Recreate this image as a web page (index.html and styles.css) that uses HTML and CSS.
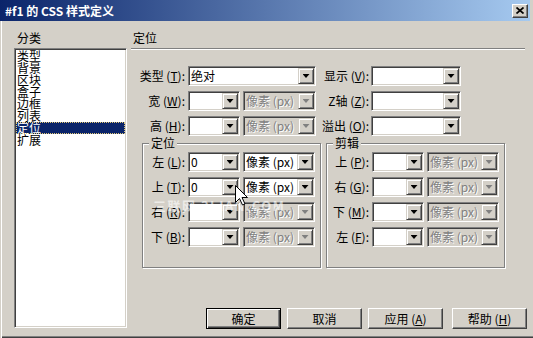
FILE: index.html
```html
<!DOCTYPE html>
<html lang="zh-CN">
<head>
    <meta charset="UTF-8">
    <title>#f1 的 CSS 样式定义</title>
    <link rel="stylesheet" href="styles.css">
</head>
<body>
<div class="window">
    <div class="titlebar">
        <span class="title">#f1 的 CSS 样式定义</span>
        <span class="close-btn">
            <svg width="8" height="7" viewBox="0 0 8 7"><path d="M0.5 0.5L7.5 6.5M7.5 0.5L0.5 6.5" stroke="#000" stroke-width="1.7"/></svg>
        </span>
    </div>

    <div class="dialog">
        <!-- 分类列表 -->
        <div class="category">
            <div class="caption">分类</div>
            <ul class="listbox">
                <li>类型</li>
                <li>背景</li>
                <li>区块</li>
                <li>盒子</li>
                <li>边框</li>
                <li>列表</li>
                <li class="selected">定位</li>
                <li>扩展</li>
            </ul>
        </div>

        <!-- 定位面板 -->
        <div class="panel">
            <div class="caption heading">定位</div>
            <div class="etched-line"></div>

            <div class="grid-top">
                <label>类型 (<u>T</u>):</label>
                <div class="combo wide"><span class="combo-text">绝对</span><span class="combo-btn"><i class="arrow"></i></span></div>
                <label>显示 (<u>V</u>):</label>
                <div class="combo side"><span class="combo-text"></span><span class="combo-btn"><i class="arrow"></i></span></div>

                <label>宽 (<u>W</u>):</label>
                <div class="pair">
                    <div class="combo num"><span class="combo-text"></span><span class="combo-btn"><i class="arrow"></i></span></div>
                    <div class="combo unit top-unit disabled"><span class="combo-text">像素 (px)</span><span class="combo-btn"><i class="arrow"></i></span></div>
                </div>
                <label>Z轴 (<u>Z</u>):</label>
                <div class="combo side"><span class="combo-text"></span><span class="combo-btn"><i class="arrow"></i></span></div>

                <label>高 (<u>H</u>):</label>
                <div class="pair">
                    <div class="combo num"><span class="combo-text"></span><span class="combo-btn"><i class="arrow"></i></span></div>
                    <div class="combo unit top-unit disabled"><span class="combo-text">像素 (px)</span><span class="combo-btn"><i class="arrow"></i></span></div>
                </div>
                <label>溢出 (<u>O</u>):</label>
                <div class="combo side"><span class="combo-text"></span><span class="combo-btn"><i class="arrow"></i></span></div>
            </div>

            <div class="groups">
                <fieldset class="group">
                    <legend>定位</legend>
                    <div class="group-grid">
                        <label>左 (<u>L</u>):</label>
                        <div class="pair">
                            <div class="combo num"><span class="combo-text">0</span><span class="combo-btn"><i class="arrow"></i></span></div>
                            <div class="combo unit"><span class="combo-text">像素 (px)</span><span class="combo-btn"><i class="arrow"></i></span></div>
                        </div>
                        <label>上 (<u>T</u>):</label>
                        <div class="pair">
                            <div class="combo num"><span class="combo-text">0</span><span class="combo-btn"><i class="arrow"></i></span></div>
                            <div class="combo unit"><span class="combo-text">像素 (px)</span><span class="combo-btn"><i class="arrow"></i></span></div>
                        </div>
                        <label>右 (<u>R</u>):</label>
                        <div class="pair">
                            <div class="combo num"><span class="combo-text"></span><span class="combo-btn"><i class="arrow"></i></span></div>
                            <div class="combo unit disabled"><span class="combo-text">像素 (px)</span><span class="combo-btn"><i class="arrow"></i></span></div>
                        </div>
                        <label>下 (<u>B</u>):</label>
                        <div class="pair">
                            <div class="combo num"><span class="combo-text"></span><span class="combo-btn"><i class="arrow"></i></span></div>
                            <div class="combo unit disabled"><span class="combo-text">像素 (px)</span><span class="combo-btn"><i class="arrow"></i></span></div>
                        </div>
                    </div>
                </fieldset>

                <fieldset class="group">
                    <legend>剪辑</legend>
                    <div class="group-grid">
                        <label>上 (<u>P</u>):</label>
                        <div class="pair">
                            <div class="combo num"><span class="combo-text"></span><span class="combo-btn"><i class="arrow"></i></span></div>
                            <div class="combo unit disabled"><span class="combo-text">像素 (px)</span><span class="combo-btn"><i class="arrow"></i></span></div>
                        </div>
                        <label>右 (<u>G</u>):</label>
                        <div class="pair">
                            <div class="combo num"><span class="combo-text"></span><span class="combo-btn"><i class="arrow"></i></span></div>
                            <div class="combo unit disabled"><span class="combo-text">像素 (px)</span><span class="combo-btn"><i class="arrow"></i></span></div>
                        </div>
                        <label>下 (<u>M</u>):</label>
                        <div class="pair">
                            <div class="combo num"><span class="combo-text"></span><span class="combo-btn"><i class="arrow"></i></span></div>
                            <div class="combo unit disabled"><span class="combo-text">像素 (px)</span><span class="combo-btn"><i class="arrow"></i></span></div>
                        </div>
                        <label>左 (<u>F</u>):</label>
                        <div class="pair">
                            <div class="combo num"><span class="combo-text"></span><span class="combo-btn"><i class="arrow"></i></span></div>
                            <div class="combo unit disabled"><span class="combo-text">像素 (px)</span><span class="combo-btn"><i class="arrow"></i></span></div>
                        </div>
                    </div>
                </fieldset>
            </div>

            <div class="buttons">
                <button class="btn default">确定</button>
                <button class="btn">取消</button>
                <button class="btn">应用 (<u>A</u>)</button>
                <button class="btn help">帮助 (<u>H</u>)</button>
            </div>
        </div>
    </div>

    <!-- 水印和鼠标指针 -->
    <div class="watermark">三联网 3LIAN.COM</div>
    <svg class="cursor" width="13" height="21" viewBox="0 0 13 21">
        <path d="M0.5 0.5V17.5L4.5 13.5L7.5 20L10 19L7 12.5H12.5Z" fill="#fff" stroke="#000" stroke-width="1"/>
    </svg>
</div>
</body>
</html>
```

FILE: styles.css
```css
:root {
    --face: #d4d0c8;
    --shadow: #808080;
    --dark: #404040;
    --light: #ffffff;
    --select: #0a246a;
}

body {
    margin: 0;
    background: var(--face);
    font-family: "Noto Sans CJK SC", "Liberation Sans", sans-serif;
    font-size: 12px;
    color: #000;
}

.window {
    position: relative;
    width: 533px;
    height: 338px;
    box-sizing: border-box;
    background: var(--face);
    overflow: hidden;
    box-shadow: inset 1px 0 var(--face), inset 2px 0 var(--light),
                inset 0 -1px var(--dark), inset 0 -2px var(--shadow);
}

/* 标题栏 */
.titlebar {
    display: flex;
    align-items: center;
    justify-content: space-between;
    height: 21px;
    margin-right: 3px;
    padding: 0 2px 0 5px;
    background: linear-gradient(to right, #0a246a, #a6caf0);
}

.title {
    color: #fff;
    font-weight: bold;
    font-size: 12px;
    line-height: 21px;
}

.close-btn {
    display: flex;
    align-items: center;
    justify-content: center;
    width: 16px;
    height: 14px;
    box-sizing: border-box;
    background: var(--face);
    border: 1px solid;
    border-color: var(--light) var(--dark) var(--dark) var(--light);
    box-shadow: inset -1px -1px var(--shadow);
}

/* 主体 */
.dialog {
    display: flex;
    gap: 4px;
    padding: 10px 0 0 14px;
}

.caption {
    line-height: 14px;
    height: 14px;
    padding-left: 3px;
    margin-bottom: 3px;
}

.category {
    width: 113px;
}

.listbox {
    list-style: none;
    margin: 0;
    height: 280px;
    box-sizing: border-box;
    background: #fff;
    border: 1px solid;
    border-color: var(--shadow) var(--light) var(--light) var(--shadow);
    box-shadow: inset 1px 1px var(--dark), inset -1px -1px var(--face);
    padding: 1px;
}

.listbox li {
    line-height: 12px;
    height: 12px;
    padding-left: 1px;
}

.listbox li.selected {
    background: var(--select);
    color: #fff;
    outline: 1px dotted #e0c878;
    outline-offset: -1px;
}

.panel {
    width: 396px;
}

.heading {
    padding-left: 2px;
}

.etched-line {
    height: 0;
    margin-right: 2px;
    border-top: 1px solid var(--shadow);
    border-bottom: 1px solid var(--light);
}

/* 上部字段 */
.grid-top {
    display: grid;
    grid-template-columns: 57px 134px 49px 90px;
    grid-auto-rows: 20px;
    row-gap: 5px;
    margin-top: 16px;
}

label {
    text-align: right;
    line-height: 20px;
    padding-right: 3px;
    white-space: nowrap;
}

.grid-top label:nth-child(4n+3) {
    padding-right: 2px;
}

.pair {
    display: flex;
    gap: 3px;
}

/* 下拉框 */
.combo {
    display: flex;
    height: 20px;
    box-sizing: border-box;
    background: #fff;
    border: 1px solid;
    border-color: var(--shadow) var(--light) var(--light) var(--shadow);
    box-shadow: inset 1px 1px var(--dark), inset -1px -1px var(--face);
    padding: 1px;
}

.combo.wide { width: 128px; }
.combo.side { width: 90px; }
.combo.num { width: 52px; }
.combo.unit { width: 72px; }
.combo.top-unit { width: 73px; }

.combo-text {
    flex: 1;
    line-height: 16px;
    padding-left: 1px;
    white-space: nowrap;
    overflow: hidden;
}

.combo-btn {
    display: flex;
    align-items: center;
    justify-content: center;
    width: 16px;
    height: 16px;
    box-sizing: border-box;
    background: var(--face);
    border: 1px solid;
    border-color: var(--face) var(--dark) var(--dark) var(--face);
    box-shadow: inset 1px 1px var(--light), inset -1px -1px var(--shadow);
}

.arrow {
    display: block;
    width: 7px;
    height: 4px;
    background: #000;
    clip-path: polygon(0 0, 100% 0, 50% 100%);
}

.combo.disabled {
    background: var(--face);
}

.combo.disabled .combo-text {
    color: var(--shadow);
    text-shadow: 1px 1px 0 var(--light);
}

.combo.disabled .arrow {
    background: var(--shadow);
}

/* 分组框 */
.groups {
    display: flex;
    gap: 5px;
    padding-left: 11px;
}

.group {
    width: 179px;
    box-sizing: border-box;
    margin: 0;
    padding: 2px 5px 20px 0;
    min-width: 0;
    border: 1px solid var(--shadow);
    box-shadow: inset 1px 1px var(--light), 1px 1px var(--light);
}

.group legend {
    margin-left: 6px;
    padding: 0 2px;
    line-height: 14px;
    background: var(--face);
}

.group-grid {
    display: grid;
    grid-template-columns: 45px 127px;
    grid-auto-rows: 20px;
    row-gap: 5px;
}

/* 按钮 */
.buttons {
    display: flex;
    justify-content: flex-end;
    gap: 6px;
    margin-top: 40px;
}

.btn {
    width: 75px;
    height: 21px;
    padding: 0;
    font-family: inherit;
    font-size: 12px;
    color: #000;
    background: var(--face);
    border: 1px solid;
    border-color: var(--light) var(--dark) var(--dark) var(--light);
    box-shadow: inset -1px -1px var(--shadow);
}

.btn.default {
    border-color: #000;
    box-shadow: inset 1px 1px var(--light), inset -1px -1px var(--dark), inset -2px -2px var(--shadow);
}

.btn.help {
    margin-left: 3px;
}

/* 覆盖层 */
.watermark {
    position: absolute;
    left: 153px;
    top: 196px;
    color: rgba(255, 255, 255, 0.6);
    font-weight: bold;
    font-size: 13px;
    letter-spacing: 1.5px;
    pointer-events: none;
}

.cursor {
    position: absolute;
    left: 235px;
    top: 185px;
}
```
